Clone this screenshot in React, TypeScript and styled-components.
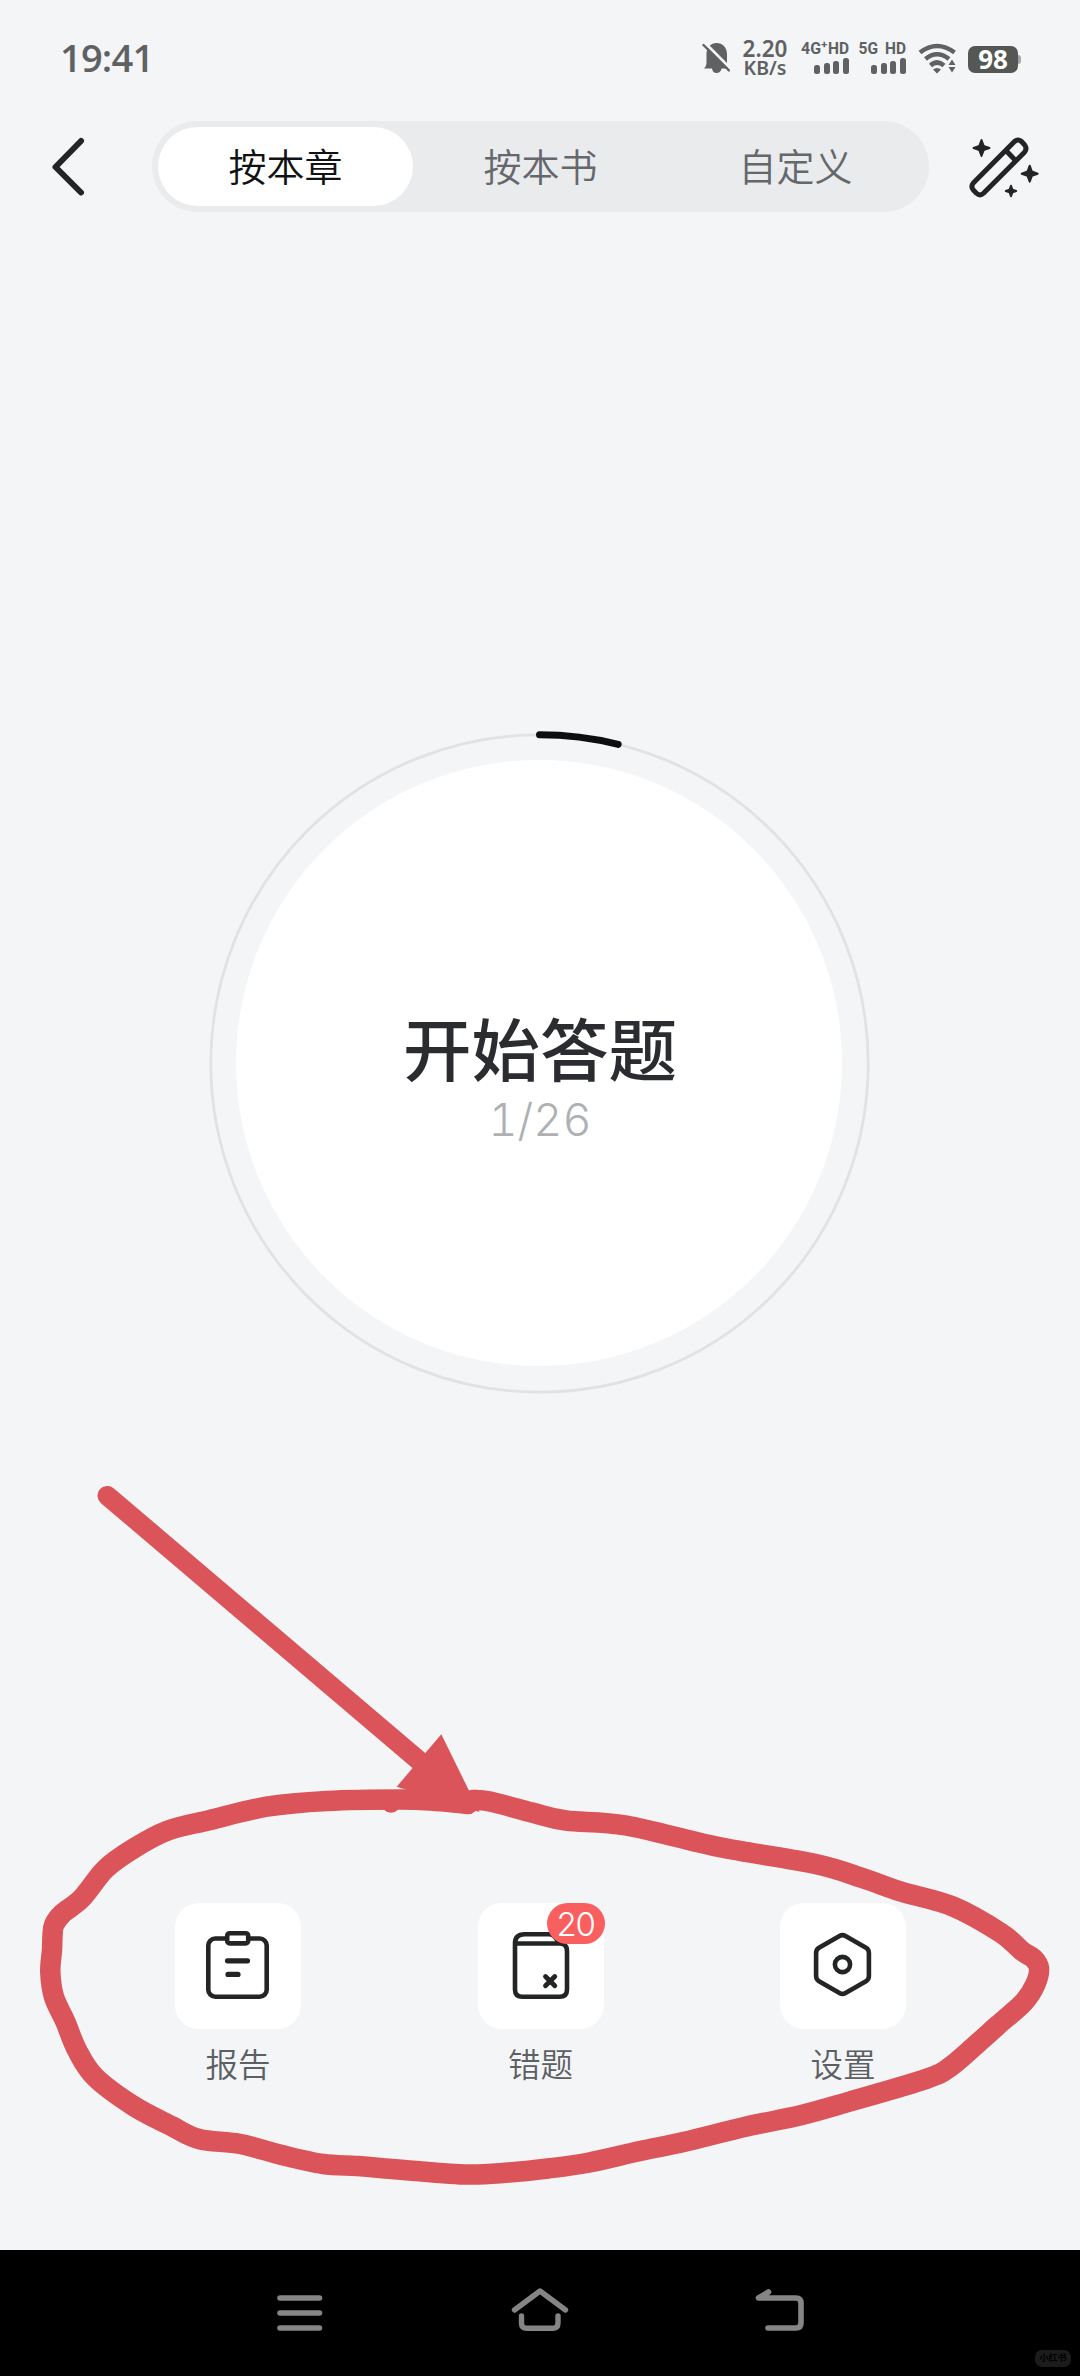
import React from 'react';
import styled, { createGlobalStyle } from 'styled-components';

const INK = '#232425';
const STATUS = '#606162';
const MARKER = '#db545a';

const GlobalStyle = createGlobalStyle`
  * { box-sizing: border-box; }
  body { margin: 0; background: #f3f5f7; }
  svg { display: block; }
`;

const Screen = styled.div`
  position: relative;
  width: 1080px;
  height: 2376px;
  display: flex;
  flex-direction: column;
  background: #f3f5f7;
  overflow: hidden;
  font-family: 'Noto Sans CJK SC', sans-serif;
`;

/* ---------- status bar ---------- */

const StatusBar = styled.header`
  height: 121px;
  padding: 38px 59px 0 60px;
  display: flex;
  justify-content: space-between;
  align-items: flex-start;
  color: ${STATUS};
`;

const Clock = styled.time`
  font: 600 38px/38px 'Open Sans', 'Noto Sans', sans-serif;
  letter-spacing: -0.8px;
`;

const StatusItems = styled.div`
  display: flex;
  align-items: flex-start;
`;

const Speed = styled.div`
  width: 46px;
  margin-left: 12px;
  padding-top: 1px;
  display: flex;
  flex-direction: column;
  align-items: center;
  white-space: nowrap;
`;

const SpeedValue = styled.span`
  height: 19px;
  font: 600 22.5px/19px 'Noto Sans', sans-serif;
`;

const SpeedUnit = styled.span`
  height: 20px;
  font: 600 19.5px/20px 'Noto Sans', sans-serif;
`;

const Sim = styled.div<{ $gap: number }>`
  width: 48px;
  margin-left: ${(p) => p.$gap}px;
  display: flex;
  flex-direction: column;
  align-items: flex-end;
  gap: 1px;
`;

const SimLabel = styled.svg`
  width: 48px;
  height: 18px;
  font: 700 17px 'Roboto', sans-serif;
  fill: ${STATUS};
`;

const Bars = styled.div`
  display: flex;
  align-items: flex-end;
  gap: 3.6px;
  height: 17px;
`;

const Bar = styled.i<{ $h: number }>`
  width: 6px;
  height: ${(p) => p.$h}px;
  border-radius: 2.5px;
  background: ${STATUS};
`;

const Wifi = styled.svg`
  margin: 5px 0 0 12px;
`;

const Battery = styled.div`
  display: flex;
  align-items: center;
  margin: 8px 0 0 12px;
`;

const BatteryBody = styled.div`
  width: 50px;
  height: 27px;
  border-radius: 7px;
  background: #555755;
  color: #fff;
  font: 700 26px/27px 'Noto Sans', sans-serif;
  text-align: center;
`;

const BatteryTip = styled.i`
  width: 3px;
  height: 9px;
  border-radius: 0 3px 3px 0;
  background: #a5a6a7;
`;

/* ---------- top bar ---------- */

const TopBar = styled.nav`
  display: flex;
  align-items: center;
  height: 91px;
  padding-left: 48px;
`;

const IconButton = styled.button`
  border: 0;
  padding: 0;
  background: none;
`;

const Tabs = styled.div`
  display: grid;
  grid-template-columns: repeat(3, 1fr);
  width: 777px;
  height: 91px;
  margin: 0 37px 0 64px;
  padding: 6px;
  border-radius: 46px;
  background: #eaebed;
`;

const Tab = styled.button<{ $active?: boolean }>`
  border: 0;
  padding: 0 0 4px;
  border-radius: 40px;
  background: ${(p) => (p.$active ? '#fff' : 'transparent')};
  color: ${(p) => (p.$active ? '#111213' : '#64676b')};
  font: 350 38px/75px 'Noto Sans CJK SC', sans-serif;
`;

/* ---------- start dial ---------- */

const Dial = styled.main`
  display: grid;
  place-items: center;
  width: 668px;
  height: 668px;
  margin: 517px auto 0 205px;
  & > * { grid-area: 1 / 1; }
`;

const StartButton = styled.button`
  width: 606px;
  height: 606px;
  border: 0;
  border-radius: 50%;
  padding: 37px 0 0 2px;
  background: #fff;
  display: flex;
  flex-direction: column;
  align-items: center;
  justify-content: center;
`;

const StartTitle = styled.strong`
  font: 500 68.5px/76px 'Noto Sans CJK SC', sans-serif;
  color: #2a2c2f;
`;

const StartCount = styled.span`
  font: 300 45px/70px 'Inter', sans-serif;
  font-variant-numeric: tabular-nums;
  color: #aeb1b4;
`;

/* ---------- bottom actions ---------- */

const Actions = styled.section`
  display: flex;
  justify-content: space-between;
  margin-top: 506px;
  padding: 0 174px 0 175px;
`;

const Action = styled.div`
  width: 126px;
  display: flex;
  flex-direction: column;
  align-items: center;
  gap: 12px;
`;

const Tile = styled.div`
  position: relative;
  width: 126px;
  height: 126px;
  border-radius: 24px;
  background: #fff;
`;

const Badge = styled.span`
  position: absolute;
  top: 0;
  right: -1px;
  width: 58px;
  height: 41px;
  border-radius: 21px;
  background: #fa5f60;
  color: #fff;
  font: 300 33px/42px 'Inter', sans-serif;
  letter-spacing: -1.2px;
  text-align: center;
`;

const ActionLabel = styled.span`
  font: 350 32.5px/44px 'Noto Sans CJK SC', sans-serif;
  color: #5c5f63;
`;

/* ---------- system navigation ---------- */

const SystemNav = styled.footer`
  margin-top: auto;
  height: 126px;
  padding: 35px 273px 0 273px;
  display: flex;
  justify-content: space-between;
  align-items: flex-start;
  background: #000;
`;

const Watermark = styled.span`
  position: absolute;
  right: 9px;
  bottom: 9px;
  width: 36px;
  height: 17px;
  border-radius: 7px;
  background: #1c1c1c;
  color: #000;
  font: 700 9px/16px 'Noto Sans CJK SC', sans-serif;
  text-align: center;
`;

const Annotation = styled.svg`
  position: absolute;
  inset: 0;
  pointer-events: none;
`;

const LOOP: [number, number][] = [
  [468, 1804], [436, 1801], [400, 1799.5], [326.7, 1801], [266.7, 1806.7], [210, 1820], [166.7, 1831],
  [132, 1849.5], [105.4, 1869], [82, 1898], [62, 1914], [54, 1925], [52.5, 1936], [52, 1950], [50.3, 1972],
  [54, 1997], [65.5, 2022], [77, 2050], [95, 2077], [133.6, 2106], [171.5, 2126], [199, 2139],
  [240.4, 2144], [281.7, 2155], [323, 2164], [357.5, 2166], [392, 2169], [464, 2174.5], [509, 2172.5],
  [548, 2168.5], [588, 2162.7], [640, 2151], [684.6, 2141.7], [746.6, 2126.5], [801.7, 2115], [850, 2101.5],
  [926, 2079], [950, 2067], [979, 2042], [998, 2025], [1024, 2002], [1035.5, 1984], [1039, 1968], [1033, 1958],
  [1022, 1951], [1001, 1933], [953, 1906.5], [901.6, 1891.7], [863.7, 1878.5], [815.5, 1864],
  [719, 1847], [626, 1825.5], [566, 1820.5], [532, 1812.5], [490, 1801.5], [472, 1800],
];

function smooth(pts: [number, number][]): string {
  const n = pts.length;
  let d = `M${pts[0][0]} ${pts[0][1]}`;
  for (let i = 0; i < n - 1; i++) {
    const a = pts[Math.max(0, i - 1)];
    const b = pts[i];
    const c = pts[i + 1];
    const e = pts[Math.min(n - 1, i + 2)];
    d += `C${b[0] + (c[0] - a[0]) / 6} ${b[1] + (c[1] - a[1]) / 6} ${c[0] - (e[0] - b[0]) / 6} ${c[1] - (e[1] - b[1]) / 6} ${c[0]} ${c[1]}`;
  }
  return d + 'Z';
}

const star = (x: number, y: number, r: number) => {
  const k = r * 0.27;
  return `M${x} ${y - r}L${x + k} ${y - k}L${x + r} ${y}L${x + k} ${y + k}L${x} ${y + r}L${x - k} ${y + k}L${x - r} ${y}L${x - k} ${y - k}Z`;
};

function SimSignal({ label, gap }: { label: string; gap: number }) {
  return (
    <Sim $gap={gap}>
      <SimLabel viewBox="0 0 48 18">
        {label === '4G' ? (
          <>
            <text x="0" y="15.5" textLength="20" lengthAdjust="spacingAndGlyphs">4G</text>
            <text x="20.3" y="10" fontSize="11">+</text>
            <text x="27" y="15.5" textLength="21" lengthAdjust="spacingAndGlyphs">HD</text>
          </>
        ) : (
          <>
            <text x="0.5" y="15.5" textLength="19.5" lengthAdjust="spacingAndGlyphs">5G</text>
            <text x="27" y="15.5" textLength="21" lengthAdjust="spacingAndGlyphs">HD</text>
          </>
        )}
      </SimLabel>
      <Bars>
        <Bar $h={9} />
        <Bar $h={11} />
        <Bar $h={13.5} />
        <Bar $h={16.5} />
      </Bars>
    </Sim>
  );
}

export default function App() {
  const angle = (2 * Math.PI) / 26;
  const r = 328.7;
  const cx = 334.5;
  const cy = 334.5;

  return (
    <Screen>
      <GlobalStyle />
      <StatusBar>
        <Clock>19:41</Clock>
        <StatusItems>
          <svg width="28" height="38" viewBox="701 38 28 38">
            <path d="M703 68.5C705 66.500 705.500 64.500 705.500 62V54C705.500 47 710 43 715.500 43C721.500 43 726 47.500 726 54V62C726 64.500 726.500 66.500 728 68.500H720.500C720 71.500 718 73 715.500 73C713 73 711.500 71.500 711 68.500Z" fill={STATUS} />
            <path d="M703.500 42.500L730 69" stroke="#f3f5f7" strokeWidth="3" />
            <path d="M702.500 45L728 70.500" stroke={STATUS} strokeWidth="2.400" strokeLinecap="round" />
          </svg>
          <Speed>
            <SpeedValue>2.20</SpeedValue>
            <SpeedUnit>KB/s</SpeedUnit>
          </Speed>
          <SimSignal label="4G" gap={13} />
          <SimSignal label="5G" gap={9} />
          <Wifi width="38" height="32" viewBox="917 43 38 32">
            <g fill="none" stroke={STATUS} strokeWidth="4.600">
              <path d="M919 52.500Q936 39.500 953.500 52.500" />
              <path d="M924.500 59Q936 49.500 948 59" />
              <path d="M929.500 65.500Q936 59.500 943 65.500" />
            </g>
            <path d="M932 69.500Q936 66.500 940 69.500L936 73.500Z" fill={STATUS} />
            <path d="M951 57.500L956 63V75H946V63Z" fill="#f3f5f7" />
            <path d="M951 59.500L954.500 65H947.500ZM947.500 67H954.500L951 72.500Z" fill={STATUS} />
          </Wifi>
          <Battery>
            <BatteryBody>98</BatteryBody>
            <BatteryTip />
          </Battery>
        </StatusItems>
      </StatusBar>

      <TopBar>
        <IconButton>
          <svg width="40" height="64" viewBox="48 134 40 64" fill="none" stroke={INK} strokeWidth="6" strokeLinecap="round" strokeLinejoin="round">
            <path d="M81 140L55.500 166L81 191.500" />
          </svg>
        </IconButton>
        <Tabs>
          <Tab $active>按本章</Tab>
          <Tab>按本书</Tab>
          <Tab>自定义</Tab>
        </Tabs>
        <IconButton>
          <svg width="76" height="72" viewBox="966 130 76 72" fill="none" stroke={INK} strokeWidth="5" strokeLinejoin="round">
            <path d="M1014.500 140.500Q1018 137.500 1021.500 140.500L1024.500 143.800Q1027.500 147.500 1024.500 151.300L983.500 192.200Q980 195.500 976.500 192.200L973.300 189Q970.500 185.500 973.300 182Z" />
            <path d="M1006 149.500L1015.500 159.500" />
            <g fill={INK} strokeWidth="2">
              <path d={star(981.5, 147, 8)} />
              <path d={star(1029.7, 172.7, 8)} />
              <path d={star(1011, 190, 5.200)} />
            </g>
          </svg>
        </IconButton>
      </TopBar>

      <Dial>
        <svg width="668" height="668" fill="none">
          <circle cx={cx} cy={cy} r={r} stroke="#e1e2e3" strokeWidth="2.800" />
          <path
            d={`M${cx} ${cy - r}A${r} ${r} 0 0 1 ${cx + r * Math.sin(angle)} ${cy - r * Math.cos(angle)}`}
            stroke="#0d0e0f"
            strokeWidth="7"
            strokeLinecap="round"
          />
        </svg>
        <StartButton>
          <StartTitle>开始答题</StartTitle>
          <StartCount>1/26</StartCount>
        </StartButton>
      </Dial>

      <Actions>
        <Action>
          <Tile>
            <svg width="126" height="126" viewBox="175 1903 126 126" fill="none" stroke={INK} strokeWidth="4.600" strokeLinecap="round">
              <rect x="208.300" y="1938.500" width="58.400" height="58.200" rx="7" />
              <rect x="227.200" y="1933.200" width="21" height="10.200" rx="2.500" fill="#fff" />
              <path d="M227.500 1960.800H247.500M228 1974.400H238" strokeWidth="5.200" />
            </svg>
          </Tile>
          <ActionLabel>报告</ActionLabel>
        </Action>
        <Action>
          <Tile>
            <svg width="126" height="126" viewBox="477.500 1903 126 126" fill="none" stroke={INK} strokeWidth="4.600" strokeLinecap="round">
              <path d="M514.500 1943.500H559Q566.500 1943.500 566.500 1951V1989.500Q566.500 1996.800 559 1996.800H522Q514.500 1996.800 514.500 1989.500V1943.500Q514.500 1934.200 524 1934.200H549Q554 1934.200 558 1942.500" />
              <path d="M545 1976.500L554.300 1985.800M554.300 1976.500L545 1985.800" strokeWidth="4.800" />
            </svg>
            <Badge>20</Badge>
          </Tile>
          <ActionLabel>错题</ActionLabel>
        </Action>
        <Action>
          <Tile>
            <svg width="126" height="126" viewBox="780 1903 126 126" fill="none" stroke={INK} strokeWidth="4.600">
              <path d="M839.500 1936Q842.500 1934.300 845.500 1936L866 1947.800Q868.900 1949.500 868.900 1953V1976Q868.900 1979.500 866 1981.200L845.500 1993Q842.500 1994.700 839.500 1993L819 1981.200Q816.100 1979.500 816.100 1976V1953Q816.100 1949.500 819 1947.800Z" />
              <circle cx="842.500" cy="1964.500" r="7.600" />
            </svg>
          </Tile>
          <ActionLabel>设置</ActionLabel>
        </Action>
      </Actions>

      <SystemNav>
        <svg width="54" height="50" viewBox="273 2285 54 50" stroke="#858585" strokeWidth="5.600" strokeLinecap="round">
          <path d="M280 2298H319.500M280 2313H319.500M280 2328H319.500" />
        </svg>
        <svg width="62" height="50" viewBox="509 2285 62 50" fill="none" stroke="#858585" strokeWidth="5.400" strokeLinecap="round" strokeLinejoin="round">
          <path d="M514.500 2310L540 2291L565.500 2310" />
          <path d="M521.500 2316V2323Q521.500 2328.300 527 2328.300H552.500Q558 2328.300 558 2323V2316" />
        </svg>
        <svg width="54" height="50" viewBox="753 2285 54 50" fill="none" stroke="#858585" strokeWidth="5.600" strokeLinecap="round" strokeLinejoin="round">
          <path d="M768.500 2292L758.500 2298H796Q801 2298 801 2303V2323Q801 2328 796 2328H768" />
        </svg>
      </SystemNav>

      <Watermark>小红书</Watermark>

      <Annotation width="1080" height="2376">
        <g stroke={MARKER} fill="none" strokeLinecap="round" strokeLinejoin="round">
          <path d={smooth(LOOP)} strokeWidth="20.500" />
          <path d="M107.300 1495.700L420 1761.500" strokeWidth="19.600" />
        </g>
        <circle cx="391" cy="1803.300" r="9.500" fill={MARKER} />
        <path d="M441.300 1734.300L396.700 1786.700L479.500 1812Z" fill={MARKER} />
      </Annotation>
    </Screen>
  );
}
